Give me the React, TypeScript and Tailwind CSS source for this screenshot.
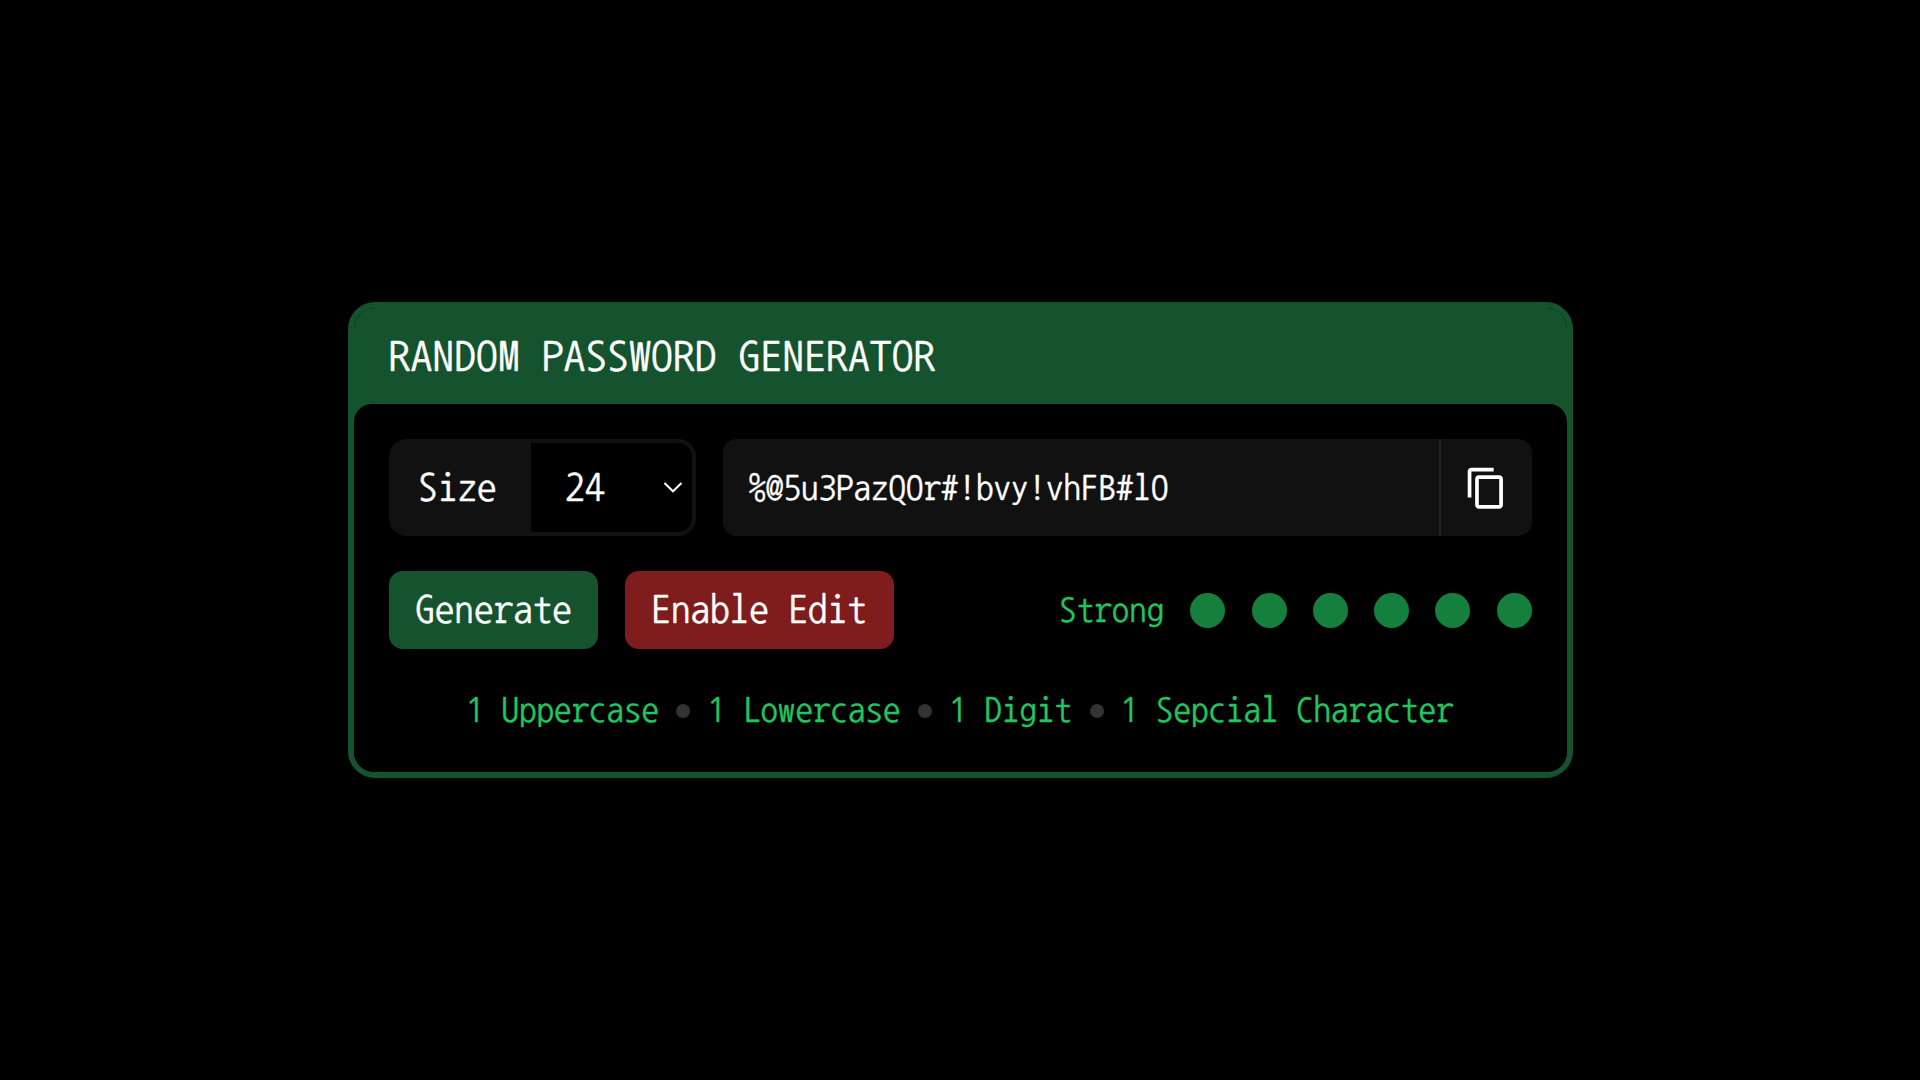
import React from "react";

const strengthDots = [0, 1, 2, 3, 4, 5];
const rules = ["1 Uppercase", "1 Lowercase", "1 Digit", "1 Sepcial Character"];

function CopyIcon() {
  return (
    <svg viewBox="0 0 24 24" className="mt-px size-[44.5px] fill-white" aria-hidden="true">
      <path d="M16 1H4c-1.1 0-2 .9-2 2v14h2V3h12V1zm3 4H8c-1.1 0-2 .9-2 2v14c0 1.1.9 2 2 2h11c1.1 0 2-.9 2-2V7c0-1.1-.9-2-2-2zm0 16H8V7h11v14z" />
    </svg>
  );
}

function ChevronIcon() {
  return (
    <svg viewBox="0 0 20 12" className="h-3 w-5" fill="none" stroke="white" strokeWidth="2" aria-hidden="true">
      <path d="M1.5 1 10 9.3 18.5 1" />
    </svg>
  );
}

function SizeSelect() {
  return (
    <div className="flex h-[97px] w-[307px] rounded-[18px] bg-[#111] py-1 pr-1 text-[39.2px] leading-none">
      <div className="flex w-[142px] items-center pt-px pl-[29.3px]">Size</div>
      <button className="flex flex-1 items-center justify-between rounded-r-[14px] bg-black pr-[9.5px] pl-[34.3px]">
        <span className="pt-px">24</span>
        <ChevronIcon />
      </button>
    </div>
  );
}

function PasswordField() {
  return (
    <div className="flex h-[97px] flex-1 overflow-hidden rounded-[14px] bg-[#111]">
      <div className="flex flex-1 items-center pl-[25.6px] text-[35px] leading-none">%@5u3PazQOr#!bvy!vhFB#lO</div>
      <button className="flex w-[93px] items-center justify-center border-l-2 border-[#222]" aria-label="Copy">
        <CopyIcon />
      </button>
    </div>
  );
}

export default function App() {
  return (
    <main className="flex h-screen items-center justify-center bg-black pl-px font-['NanumGothicCoding','Noto_Sans_Mono_CJK_JP','Noto_Sans_CJK_JP',monospace] text-white [-webkit-text-stroke:0.3px]">
      <section className="h-[476px] w-[1225px] rounded-[27px] border-6 border-[#14532d] bg-black">
        <header className="h-[116px] rounded-t-[21px] bg-[#14532d] px-[34.5px]">
          <h1 className="flex h-[96px] items-center pt-0.5 text-[43.75px] leading-none">RANDOM PASSWORD GENERATOR</h1>
        </header>
        <div className="relative -mt-5 flex flex-col gap-[35px] rounded-[20px] rounded-t-[18px] bg-black p-[35px]">
          <div className="flex gap-[27px]">
            <SizeSelect />
            <PasswordField />
          </div>
          <div className="flex h-[78px] items-center justify-between pr-[0.3px]">
            <div className="flex gap-[26.5px] text-[39.2px] leading-none">
              <button className="h-[78px] rounded-[14px] bg-[#14532d] px-[26.2px]">Generate</button>
              <button className="h-[78px] rounded-[14px] bg-[#7f1d1d] px-[26.7px]">Enable Edit</button>
            </div>
            <div className="flex items-center gap-[26.25px]">
              <span className="pb-0.5 text-[35px] leading-none text-[#22c55e]">Strong</span>
              {strengthDots.map((dot) => (
                <span key={dot} className="size-[35px] rounded-full bg-[#15803d]" />
              ))}
            </div>
          </div>
          <div className="flex h-[53px] items-center justify-center gap-[17.5px] pr-px text-[35px] leading-none text-[#22c55e]">
            {rules.map((rule, index) => (
              <React.Fragment key={rule}>
                {index > 0 && <span className="size-[14px] rounded-full bg-[#333]" />}
                <span className="pb-0.5">{rule}</span>
              </React.Fragment>
            ))}
          </div>
        </div>
      </section>
    </main>
  );
}
